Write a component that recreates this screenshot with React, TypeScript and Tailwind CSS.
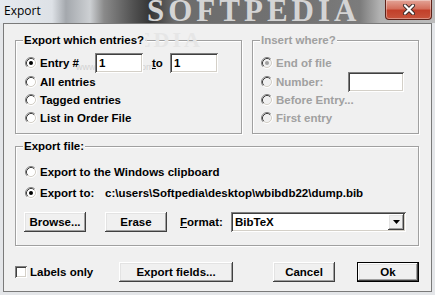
import React from 'react';

const sunken =
  'shadow-[inset_1px_1px_0_#808080,inset_-1px_-1px_0_#ffffff,inset_2px_2px_0_#404040,inset_-2px_-2px_0_#d4d0c8]';
const raised =
  'shadow-[inset_-1px_-1px_0_#404040,inset_1px_1px_0_#ffffff,inset_-2px_-2px_0_#a0a0a0,inset_2px_2px_0_#e3e3e3]';
const etched = 'border border-[#a0a0a0] shadow-[1px_1px_0_#ffffff,inset_1px_1px_0_#ffffff]';

function Radio({ checked, disabled }: { checked?: boolean; disabled?: boolean }) {
  return (
    <svg width="12" height="12" viewBox="0 0 12 12" className="shrink-0">
      <circle cx="6" cy="6" r="4.5" fill={disabled ? '#f0f0f0' : '#ffffff'} />
      <path d="M9.89 2.11A5.5 5.5 0 0 0 2.11 9.89" fill="none" stroke="#808080" />
      <path d="M2.11 9.89A5.5 5.5 0 0 0 9.89 2.11" fill="none" stroke="#ffffff" />
      <path d="M9.18 2.82A4.5 4.5 0 0 0 2.82 9.18" fill="none" stroke="#404040" />
      <path d="M2.82 9.18A4.5 4.5 0 0 0 9.18 2.82" fill="none" stroke="#d4d0c8" />
      {checked && <circle cx="6" cy="6" r="2" fill={disabled ? '#a0a0a0' : '#000000'} />}
    </svg>
  );
}

function Legend({ children, gray }: { children: React.ReactNode; gray?: boolean }) {
  return (
    <span
      className={`absolute left-[7px] top-[-8px] px-[1px] bg-[#f0f0f0] leading-[14px] ${gray ? 'text-[#a0a0a0]' : ''}`}
    >
      {children}
    </span>
  );
}

export default function App() {
  return (
    <div className="w-[435px] h-[295px] overflow-hidden bg-[#e4e6e9] font-['Liberation_Sans',Arial,sans-serif] text-black">
      {/* Title bar */}
      <div className="relative h-[23px] overflow-hidden flex items-start justify-between bg-[linear-gradient(90deg,#e6eaef_0px,#dde1e6_52px,#a4a8ad_66px,#cdd0d3_90px,#8a8a8a_104px,#4e4e4e_135px,#353535_150px,#6c6c6c_175px,#727272_300px,#7c7c7c_360px,#b2b2b2_380px,#bcbcbc_435px)]">
        <span className="pointer-events-none absolute left-[147px] top-[-5px] font-['Liberation_Serif',serif] font-bold text-[31px] leading-[31px] tracking-[4px] text-[#d4d4d4]">
          SOFTPEDIA
        </span>
        <span className="relative pl-[4px] pt-[3px] font-['Open_Sans',sans-serif] text-[12px] leading-[16px] text-black">
          Export
        </span>
        <div className="relative mr-[3px] w-[47px] h-[20px] rounded-b-[4px] border border-t-0 border-[#5e2219] bg-[linear-gradient(180deg,#e3a497_0%,#d4705d_45%,#c2402a_55%,#c8543c_100%)] flex items-center justify-center shadow-[inset_0_0_0_1px_rgba(255,255,255,0.35)]">
          <svg width="14" height="11" viewBox="0 0 14 11">
            <path d="M3 1.5L11 9.5M11 1.5L3 9.5" stroke="#3a2a28" strokeWidth="4" strokeLinecap="round" />
            <path d="M3 1.5L11 9.5M11 1.5L3 9.5" stroke="#ffffff" strokeWidth="2.2" strokeLinecap="round" />
          </svg>
        </div>
      </div>

      {/* Client area */}
      <div className="relative mx-[3px] h-[269px] border border-[#7a7a7a] bg-[#f0f0f0] pl-[11px] pt-[16px] text-[11.5px] leading-[14px] font-bold">
        <div className="flex gap-[10px]">
          {/* Export which entries */}
          <div className={`relative w-[227px] h-[94px] ${etched} pt-[12px] pl-[9px]`}>
            <span className="pointer-events-none absolute left-[34px] top-[-12px] font-['Liberation_Serif',serif] font-bold text-[22px] leading-[22px] tracking-[3px] text-[#e6e6e6]">
              SOFTPEDIA
            </span>
            <span className="pointer-events-none absolute left-[60px] top-[21px] font-normal text-[9px] leading-[10px] text-[#d2d2d2]">
              www.softpedia.com
            </span>
            <Legend>Export which entries?</Legend>
            <div className="relative flex items-center h-[20px]">
              <div className="flex items-center gap-[3px] w-[70px]">
                <Radio checked />
                <span>Entry #</span>
              </div>
              <div className={`w-[48px] h-[20px] bg-white ${sunken} pl-[4px] flex items-center`}>1</div>
              <span className="ml-[9px] w-[18px]">
                <span className="underline underline-offset-[1px]">t</span>o
              </span>
              <div className={`w-[48px] h-[20px] bg-white ${sunken} pl-[4px] flex items-center`}>1</div>
            </div>
            <div className="flex items-center gap-[3px] h-[18px]">
              <Radio />
              <span>All entries</span>
            </div>
            <div className="flex items-center gap-[3px] h-[18px]">
              <Radio />
              <span>Tagged entries</span>
            </div>
            <div className="flex items-center gap-[3px] h-[18px]">
              <Radio />
              <span>List in Order File</span>
            </div>
          </div>

          {/* Insert where */}
          <div className={`relative w-[167px] h-[94px] ${etched} pt-[12px] pl-[8px] text-[#a0a0a0]`}>
            <Legend gray>Insert where?</Legend>
            <div className="flex items-center gap-[3px] h-[20px]">
              <Radio checked disabled />
              <span>End of file</span>
            </div>
            <div className="flex items-center h-[18px]">
              <div className="flex items-center gap-[3px] w-[87px]">
                <Radio disabled />
                <span>Number:</span>
              </div>
              <div className={`w-[56px] h-[20px] shrink-0 bg-white ${sunken}`} />
            </div>
            <div className="flex items-center gap-[3px] h-[18px]">
              <Radio disabled />
              <span>Before Entry...</span>
            </div>
            <div className="flex items-center gap-[3px] h-[18px]">
              <Radio disabled />
              <span>First entry</span>
            </div>
          </div>
        </div>

        {/* Export file */}
        <div className={`relative mt-[12px] w-[404px] h-[100px] ${etched} pt-[16px]`}>
          <Legend>Export file:</Legend>
          <div className="flex items-center gap-[3px] h-[18px] pl-[9px]">
            <Radio />
            <span>Export to the Windows clipboard</span>
          </div>
          <div className="flex items-center h-[18px] mt-[3px] pl-[9px]">
            <div className="flex items-center gap-[3px] w-[80px]">
              <Radio checked />
              <span>Export to:</span>
            </div>
            <span>c:\users\Softpedia\desktop\wbibdb22\dump.bib</span>
          </div>
          <div className="flex items-center h-[20px] mt-[10px] pl-[8px]">
            <div className={`w-[62px] h-[20px] bg-[#f0f0f0] ${raised} flex items-center justify-center`}>Browse...</div>
            <div className={`ml-[19px] w-[62px] h-[20px] bg-[#f0f0f0] ${raised} flex items-center justify-center`}>Erase</div>
            <span className="ml-[13px] w-[51px]">
              <span className="underline underline-offset-[1px]">F</span>ormat:
            </span>
            <div className={`w-[175px] h-[20px] bg-white ${sunken} flex items-center justify-between pl-[4px] pr-[2px]`}>
              <span>BibTeX</span>
              <div className={`w-[16px] h-[16px] bg-[#f0f0f0] ${raised} flex items-center justify-center`}>
                <svg width="7" height="4" viewBox="0 0 7 4">
                  <path d="M0 0H7L3.5 4Z" fill="#000000" />
                </svg>
              </div>
            </div>
          </div>
        </div>

        {/* Bottom row */}
        <div className="flex items-center h-[20px] mt-[16px]">
          <div className="flex items-center gap-[3px] w-[104px]">
            <div className={`w-[12px] h-[12px] bg-white ${sunken}`} />
            <span>Labels only</span>
          </div>
          <div className={`w-[114px] h-[20px] bg-[#f0f0f0] ${raised} flex items-center justify-center`}>Export fields...</div>
          <div className={`ml-[40px] w-[62px] h-[20px] bg-[#f0f0f0] ${raised} flex items-center justify-center`}>Cancel</div>
          <div className={`ml-[22px] w-[62px] h-[20px] border border-black bg-[#f0f0f0] ${raised} flex items-center justify-center`}>Ok</div>
        </div>
      </div>
    </div>
  );
}
